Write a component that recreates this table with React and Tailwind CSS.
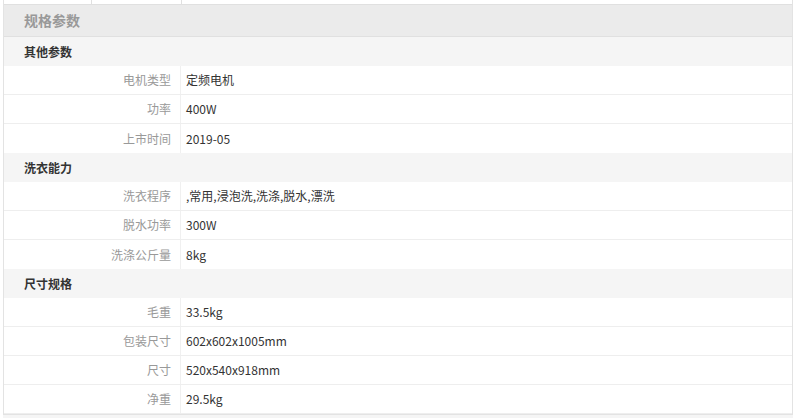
import React from 'react';

// 规格参数数据
const groups = [
  {
    title: '其他参数',
    rows: [
      ['电机类型', '定频电机'],
      ['功率', '400W'],
      ['上市时间', '2019-05'],
    ],
  },
  {
    title: '洗衣能力',
    rows: [
      ['洗衣程序', ',常用,浸泡洗,洗涤,脱水,漂洗'],
      ['脱水功率', '300W'],
      ['洗涤公斤量', '8kg'],
    ],
  },
  {
    title: '尺寸规格',
    rows: [
      ['毛重', '33.5kg'],
      ['包装尺寸', '602x602x1005mm'],
      ['尺寸', '520x540x918mm'],
      ['净重', '29.5kg'],
    ],
  },
];

function App() {
  return (
    <div
      className="w-[801px] h-[418px] overflow-hidden bg-white text-[12px] text-[#333]"
      style={{ fontFamily: '"Microsoft YaHei", "Noto Sans CJK SC", sans-serif' }}
    >
      <div className="ml-[3px] w-[790px] border-l border-r border-[#e3e3e3]">
        {/* 上方标签残留 */}
        <div className="flex h-[5px] border-b border-[#e0e0e0]">
          <div className="w-[88px] border-r border-[#e0e0e0]"></div>
          <div className="w-[90px] border-r border-[#e0e0e0]"></div>
        </div>

        <div className="h-[32px] flex items-center pl-[20px] bg-[#ebebeb] border-b border-[#e0e0e0] text-[14px] font-bold text-[#999]">
          规格参数
        </div>

        {groups.map((g) => (
          <div key={g.title}>
            <div className="h-[29px] flex items-center pl-[20px] bg-[#f5f5f5] font-bold text-[#333]">
              {g.title}
            </div>
            {g.rows.map(([label, value], i) => (
              <div
                key={label}
                className={`flex h-[29px] ${i === g.rows.length - 1 && g.title !== '尺寸规格' ? '' : 'border-b border-[#eeeeee]'}`}
              >
                <div className="w-[177px] pr-[9px] flex items-center justify-end text-[#999] border-r border-[#f0f0f0]">
                  {label}
                </div>
                <div className="flex-1 pl-[5px] flex items-center text-[#333]">{value}</div>
              </div>
            ))}
          </div>
        ))}
      </div>
      <div className="ml-[3px] w-[790px] h-[4px] bg-[#f5f5f5] border-t border-[#e3e3e3]"></div>
    </div>
  );
}

export default App;
